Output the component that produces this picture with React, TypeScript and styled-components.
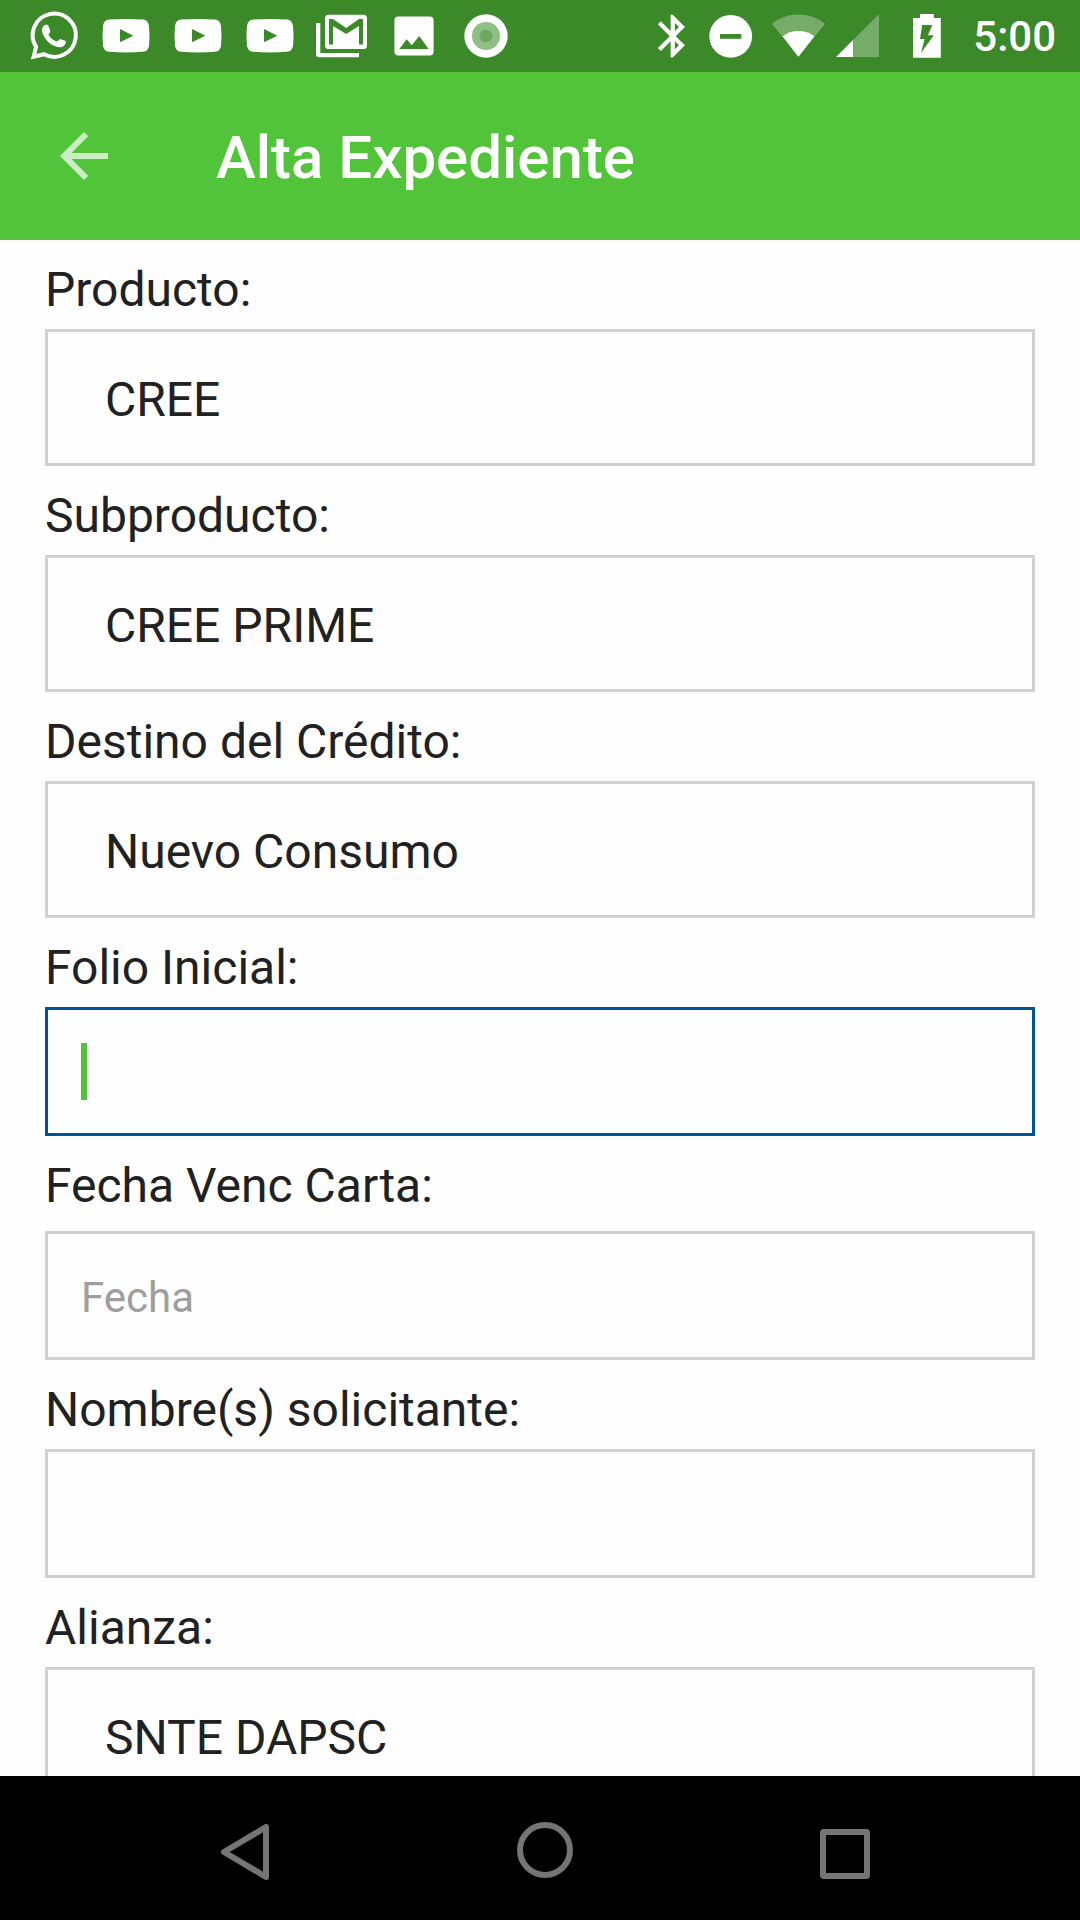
import React, { useState } from "react";
import styled, { createGlobalStyle } from "styled-components";

const color = {
  primary: "#52c43a",
  primaryDark: "#3b8929",
  text: "#212121",
  hint: "#9e9e9e",
  line: "#d1d1d1",
  focus: "#03539b",
  navIcon: "#757575",
};

const GlobalStyle = createGlobalStyle`
  *, *::before, *::after { box-sizing: border-box; }
  body {
    margin: 0;
    background: #fefefe;
    color: ${color.text};
    font-family: Roboto, "Noto Sans", sans-serif;
  }
`;

const Screen = styled.div`
  display: flex;
  flex-direction: column;
  height: 100vh;
`;

const StatusBar = styled.div`
  display: flex;
  flex: none;
  justify-content: space-between;
  padding: 0 24px 0 18px;
  background: ${color.primaryDark};
  color: #fff;
`;

const StatusGroup = styled.div`
  display: flex;
  align-items: center;
`;

const StatusIcon = styled.svg`
  display: block;
  height: 72px;
  fill: #fff;
`;

const Clock = styled.time`
  padding: 2px 0 0 20px;
  font-size: 42px;
  font-weight: 500;
  line-height: 48px;
`;

const AppBar = styled.header`
  display: flex;
  flex: none;
  align-items: center;
  gap: 96px;
  height: 168px;
  padding: 0 48px;
  background: ${color.primary};
  color: #fff;
`;

const IconButton = styled.button`
  display: flex;
  padding: 0;
  border: 0;
  background: none;
  color: inherit;
  cursor: pointer;
`;

const Title = styled.h1`
  margin: 0;
  padding-top: 4px;
  font-size: 60px;
  font-weight: 500;
  line-height: 72px;
`;

const Form = styled.form`
  flex: 1;
  min-height: 0;
  padding: 0 45px;
  overflow-y: auto;
  scrollbar-width: none;
`;

const Field = styled.div<{ $roomy?: boolean }>`
  display: flex;
  flex-direction: column;
  gap: ${(p) => (p.$roomy ? 17 : 11)}px;
  padding-top: 22px;
`;

const Label = styled.label`
  font-size: 48px;
  line-height: 56px;
`;

const Select = styled.select`
  appearance: none;
  width: 100%;
  height: 137px;
  padding: 4px 57px 0;
  border: 3px solid ${color.line};
  border-radius: 0;
  outline: none;
  background: none;
  color: inherit;
  font-family: inherit;
  font-size: 48px;
`;

const InputBox = styled.div<{ $active: boolean }>`
  display: flex;
  align-items: center;
  height: 129px;
  padding: 0 33px;
  border: 3px solid ${(p) => (p.$active ? color.focus : color.line)};
`;

const Caret = styled.span`
  flex: none;
  width: 6px;
  height: 57px;
  background: ${color.primary};
`;

const Input = styled.input<{ $hideCaret: boolean }>`
  flex: 1;
  min-width: 0;
  height: 100%;
  padding: 4px 0 0;
  border: 0;
  outline: none;
  background: none;
  color: inherit;
  caret-color: ${(p) => (p.$hideCaret ? "transparent" : color.primary)};
  font-family: inherit;
  font-size: 42px;

  &::placeholder {
    color: ${color.hint};
    opacity: 1;
  }
`;

const NavBar = styled.nav`
  display: flex;
  flex: none;
  justify-content: center;
  height: 144px;
  padding-left: 10px;
  background: #000;
`;

const NavButton = styled(IconButton)`
  align-items: center;
  justify-content: center;
  width: 300px;
`;

const NavIcon = styled.svg`
  width: 72px;
  height: 72px;
  fill: none;
  stroke: ${color.navIcon};
  stroke-width: 6;
  stroke-linejoin: round;
`;

const Glyph = ({ w = 72, children }: { w?: number; children: React.ReactNode }) => (
  <StatusIcon width={w} viewBox={`0 0 ${w} 72`} aria-hidden="true">
    {children}
  </StatusIcon>
);

const WhatsAppIcon = () => (
  <Glyph>
    <g transform="translate(12.5 12)">
      <path
        d="M3.1 44.7 5.6 34.9A21.6 21.6 0 1 1 13.5 42.2Z"
        fill="none"
        stroke="#fff"
        strokeWidth="4"
        strokeMiterlimit="10"
      />
      <path d="M12.2 15.3C13 13.6 14 12.7 15.5 12.7C17.2 12.7 17.6 13 18.1 14.4L19.6 18.2C20 19.5 19.6 20.3 18 22.5C19.6 25.6 21.8 27.6 25 29.1C26 29.5 26.6 29.6 27.3 29C28.8 27.3 29.4 27 30.8 27.4L34.3 28.4C35.5 29 35.5 30 35.1 31.3C34.4 33.8 31.6 35.4 28.8 35.3C25.4 35 21 33.2 18 30.2C15 27.2 12 22.8 11.5 19.2C11.4 17.6 11.6 16.4 12.2 15.3Z" />
    </g>
  </Glyph>
);

const YouTubeIcon = () => (
  <Glyph>
    <path
      fillRule="evenodd"
      d="M19 19.6Q36 18.4 53 19.6Q58 20 59 26Q60 35.6 59 46Q58 51.4 53 51.8Q36 53 19 51.8Q14 51.4 13 46Q12 35.6 13 26Q14 20 19 19.6ZM30 29V42.3L43.3 35.7Z"
    />
  </Glyph>
);

const MailStackIcon = () => (
  <Glyph>
    <path d="M10 23H14.3V53H53V57.3H13Q10 57.3 10 54.3Z" />
    <rect x="19" y="14.7" width="42" height="34.3" rx="3.5" />
    <path
      fill={color.primaryDark}
      d="M23 19H27L40.2 28 53 19H57V44.6H53V26L40.2 34 27 26V44.6H23Z"
    />
  </Glyph>
);

const PictureIcon = () => (
  <Glyph>
    <rect x="16.4" y="16.4" width="39.2" height="39" rx="4" />
    <path fill={color.primaryDark} d="M21.3 49 28.7 39.3 33.7 45.3 41.3 36 50.6 49Z" />
  </Glyph>
);

const RecordIcon = () => (
  <Glyph>
    <circle cx="36" cy="36" r="21.7" />
    <circle cx="36" cy="36" r="14" fill="#8fbf86" />
    <circle cx="36" cy="36" r="6.4" fill="#6ea964" />
  </Glyph>
);

const BluetoothIcon = () => (
  <Glyph w={60}>
    <path
      transform="translate(6.2 10.6) scale(2.13)"
      d="M17.71 7.71 12 2h-1v7.59L6.41 5 5 6.41 10.59 12 5 17.59 6.41 19 11 14.41V22h1l5.71-5.71-4.3-4.29 4.3-4.29zM13 5.83l1.88 1.88L13 9.59V5.83zm1.88 10.46L13 18.17v-3.76l1.88 1.88z"
    />
  </Glyph>
);

const DoNotDisturbIcon = () => (
  <Glyph w={60}>
    <circle cx="29.7" cy="36.3" r="21.4" />
    <rect x="19" y="34" width="21.3" height="4.8" fill={color.primaryDark} />
  </Glyph>
);

const WifiIcon = () => (
  <Glyph>
    <path fillOpacity="0.3" d="M37.4 56.8 11 23.8A42 42 0 0 1 64 23.8Z" />
    <path d="M37.4 56.8 21.6 36.3A26.2 26.2 0 0 1 53.4 36.3Z" />
  </Glyph>
);

const SignalIcon = () => (
  <Glyph w={60}>
    <path fillOpacity="0.3" d="M20 40V57H46V14Z" />
    <path d="M3 57H20V40Z" />
  </Glyph>
);

const BatteryIcon = () => (
  <Glyph w={60}>
    <path
      fillRule="evenodd"
      d="M27 14H40.8V18H47.8V57.8H20V18H27ZM29.2 25 27 39H31.6L28 53 40.8 35.3H35L39.4 25Z"
    />
  </Glyph>
);

type SelectFieldProps = { id: string; label: string; options: string[] };

const SelectField = ({ id, label, options }: SelectFieldProps) => (
  <Field>
    <Label htmlFor={id}>{label}</Label>
    <Select id={id} name={id}>
      {options.map((option) => (
        <option key={option}>{option}</option>
      ))}
    </Select>
  </Field>
);

type TextFieldProps = {
  id: string;
  label: string;
  placeholder?: string;
  roomy?: boolean;
  active: boolean;
  onActivate: (id: string) => void;
};

const TextField = ({ id, label, placeholder, roomy, active, onActivate }: TextFieldProps) => {
  const [value, setValue] = useState("");
  const showCaret = active && value === "";
  return (
    <Field $roomy={roomy}>
      <Label htmlFor={id}>{label}</Label>
      <InputBox $active={active}>
        {showCaret && <Caret />}
        <Input
          id={id}
          name={id}
          type="text"
          autoComplete="off"
          placeholder={placeholder}
          value={value}
          $hideCaret={showCaret}
          onFocus={() => onActivate(id)}
          onChange={(event) => setValue(event.target.value)}
        />
      </InputBox>
    </Field>
  );
};

export default function App() {
  const [active, setActive] = useState("folio");
  return (
    <>
      <GlobalStyle />
      <Screen>
        <StatusBar>
          <StatusGroup>
            <WhatsAppIcon />
            <YouTubeIcon />
            <YouTubeIcon />
            <YouTubeIcon />
            <MailStackIcon />
            <PictureIcon />
            <RecordIcon />
          </StatusGroup>
          <StatusGroup>
            <BluetoothIcon />
            <DoNotDisturbIcon />
            <WifiIcon />
            <SignalIcon />
            <BatteryIcon />
            <Clock>5:00</Clock>
          </StatusGroup>
        </StatusBar>

        <AppBar>
          <IconButton type="button" aria-label="Regresar">
            <svg width="72" height="72" viewBox="0 0 24 24" fill="#fff" fillOpacity="0.7">
              <path d="M20 11H7.83l5.59-5.59L12 4l-8 8 8 8 1.41-1.41L7.83 13H20v-2z" />
            </svg>
          </IconButton>
          <Title>Alta Expediente</Title>
        </AppBar>

        <Form>
          <SelectField id="producto" label="Producto:" options={["CREE"]} />
          <SelectField id="subproducto" label="Subproducto:" options={["CREE PRIME"]} />
          <SelectField id="destino" label="Destino del Crédito:" options={["Nuevo Consumo"]} />
          <TextField
            id="folio"
            label="Folio Inicial:"
            active={active === "folio"}
            onActivate={setActive}
          />
          <TextField
            id="fecha"
            label="Fecha Venc Carta:"
            placeholder="Fecha"
            roomy
            active={active === "fecha"}
            onActivate={setActive}
          />
          <TextField
            id="nombre"
            label="Nombre(s) solicitante:"
            active={active === "nombre"}
            onActivate={setActive}
          />
          <SelectField id="alianza" label="Alianza:" options={["SNTE DAPSC"]} />
        </Form>

        <NavBar>
          <NavButton type="button" aria-label="Atrás">
            <NavIcon viewBox="0 0 72 72">
              <path d="M57 15V65L15 40Z" />
            </NavIcon>
          </NavButton>
          <NavButton type="button" aria-label="Inicio">
            <NavIcon viewBox="0 0 72 72">
              <circle cx="36" cy="38" r="25" />
            </NavIcon>
          </NavButton>
          <NavButton type="button" aria-label="Recientes">
            <NavIcon viewBox="0 0 72 72">
              <rect x="14" y="20" width="44" height="44" rx="1" />
            </NavIcon>
          </NavButton>
        </NavBar>
      </Screen>
    </>
  );
}
